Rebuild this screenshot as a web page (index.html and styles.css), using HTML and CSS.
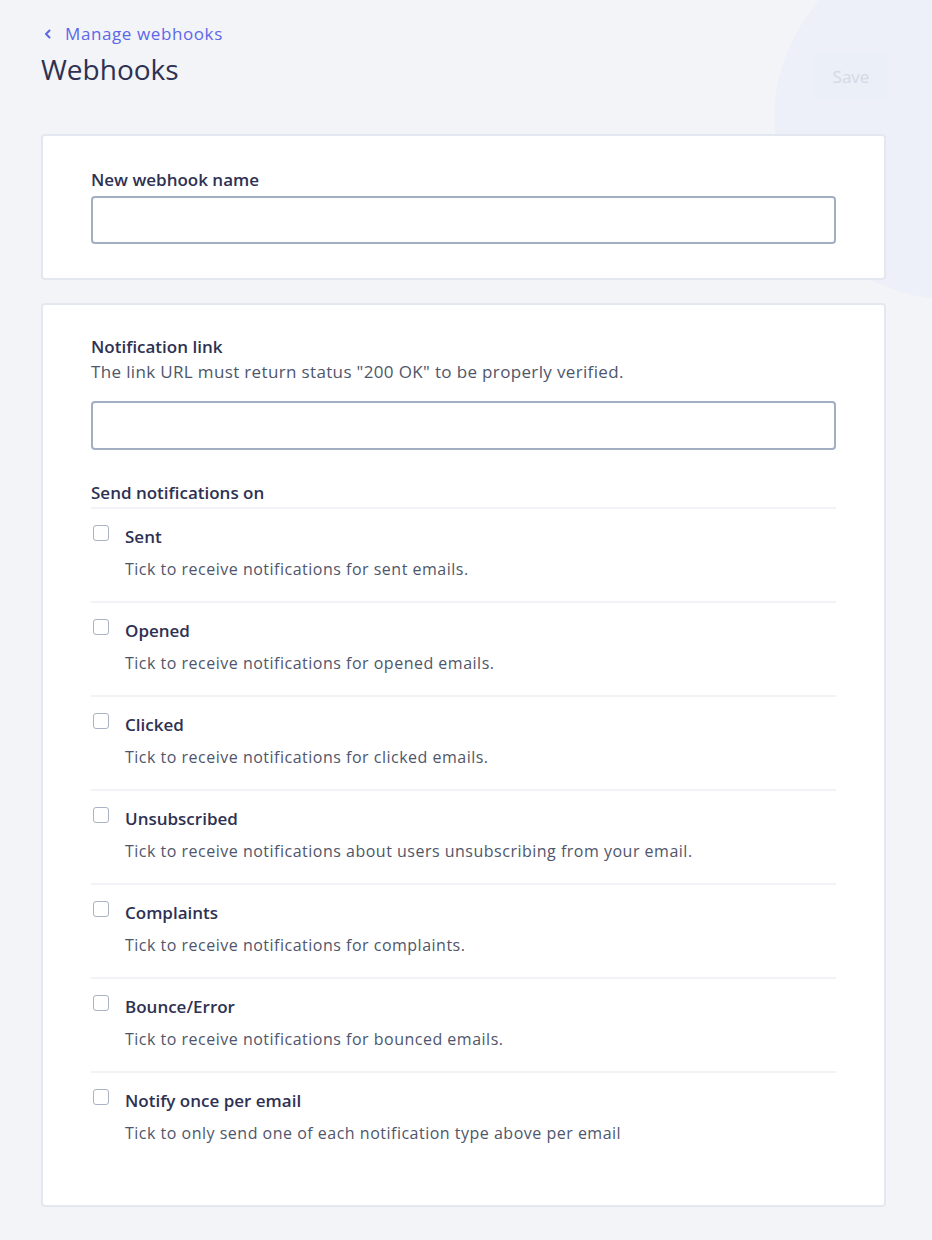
FILE: index.html
```html
<!DOCTYPE HTML>
<html>

<head>
  <title>Webhooks</title>
  <meta charset="utf-8" />
  <link rel="stylesheet" href="styles.css">
</head>

<body>
<div class="page">
  <div class="blob"></div>
  <a class="back" href="#">
    <svg width="10" height="10" viewBox="0 0 10 10"><path d="M6.5 1.5 L3 5 L6.5 8.5" fill="none" stroke="#5c67e8" stroke-width="2" stroke-linecap="round" stroke-linejoin="round"/></svg>
    Manage webhooks
  </a>
  <div class="head">
    <h1>Webhooks</h1>
    <button class="save" disabled>Save</button>
  </div>

  <div class="card card-name">
    <label class="label" for="name">New webhook name</label>
    <input class="field" id="name" type="text">
  </div>

  <div class="card card-link">
    <label class="label" for="link">Notification link</label>
    <p class="hint">The link URL must return status "200 OK" to be properly verified.</p>
    <input class="field" id="link" type="text">

    <div class="label send">Send notifications on</div>
    <ul class="events">
      <li><span class="box"></span><div><b>Sent</b><p>Tick to receive notifications for sent emails.</p></div></li>
      <li><span class="box"></span><div><b>Opened</b><p>Tick to receive notifications for opened emails.</p></div></li>
      <li><span class="box"></span><div><b>Clicked</b><p>Tick to receive notifications for clicked emails.</p></div></li>
      <li><span class="box"></span><div><b>Unsubscribed</b><p>Tick to receive notifications about users unsubscribing from your email.</p></div></li>
      <li><span class="box"></span><div><b>Complaints</b><p>Tick to receive notifications for complaints.</p></div></li>
      <li><span class="box"></span><div><b>Bounce/Error</b><p>Tick to receive notifications for bounced emails.</p></div></li>
      <li><span class="box"></span><div><b>Notify once per email</b><p>Tick to only send one of each notification type above per email</p></div></li>
    </ul>
  </div>
</div>
</body>

</html>
```

FILE: styles.css
```css
* {
  margin: 0;
  padding: 0;
  box-sizing: border-box;
}

body {
  margin: 0;
  background: #f3f4f8;
  font-family: "Open Sans", "Noto Sans", sans-serif;
  color: #2e3152;
}

.page {
  position: relative;
  overflow: hidden;
  min-height: 1240px;
  padding: 22px 46px 34px 41px;
}

.blob {
  position: absolute;
  left: 774px;
  top: -60px;
  width: 360px;
  height: 360px;
  border-radius: 50%;
  background: #edf0f8;
}

.back,
.head,
.card {
  position: relative;
}

.back {
  display: flex;
  align-items: center;
  gap: 12px;
  padding-left: 2px;
  color: #5c67e8;
  text-decoration: none;
  font-size: 17px;
  letter-spacing: 0.6px;
  line-height: 24px;
}

.head {
  display: flex;
  justify-content: space-between;
  align-items: flex-start;
  height: 54px;
}

h1 {
  font-size: 28px;
  font-weight: 400;
  line-height: 40px;
  margin-top: 3px;
}

.save {
  margin-top: 7px;
  margin-right: -2px;
  width: 74px;
  height: 47px;
  border: none;
  border-radius: 3px;
  background: #ebeff7;
  color: #d3d9e6;
  font-family: inherit;
  font-size: 17px;
}

.card {
  background: #fff;
  border: 2px solid #e3e7ef;
  border-radius: 4px;
  padding: 32px 48px 34px;
}

.card-name {
  margin-top: 34px;
}

.card-link {
  margin-top: 23px;
  padding-top: 30px;
  padding-bottom: 38px;
}

.label {
  display: block;
  font-size: 17px;
  font-weight: 600;
  line-height: 24px;
  color: #2e3152;
}

.hint {
  font-size: 17px;
  letter-spacing: 0.35px;
  line-height: 26px;
  color: #4f566b;
}

.field {
  display: block;
  width: 100%;
  height: 48px;
  margin-top: 4px;
  border: 2px solid #a2aec1;
  border-radius: 4px;
  background: #fff;
}

.card-link .field {
  margin-top: 16px;
  height: 49px;
}

.send {
  margin-top: 31px;
  padding-bottom: 2px;
}

.events {
  list-style: none;
  border-top: 2px solid #f1f3f7;
}

.events li {
  display: flex;
  gap: 16px;
  height: 94px;
  padding-top: 16px;
  border-bottom: 2px solid #f1f3f7;
}

.events li:last-child {
  border-bottom: none;
}

.box {
  flex: none;
  width: 16px;
  height: 16px;
  margin: 0 0 0 2px;
  border: 1px solid #a9b3c4;
  border-radius: 3px;
}

.events b {
  display: block;
  font-size: 17px;
  font-weight: 600;
  line-height: 24px;
}

.events p {
  margin-top: 8px;
  font-size: 16px;
  letter-spacing: 0.5px;
  line-height: 24px;
  color: #4f566b;
}
```
